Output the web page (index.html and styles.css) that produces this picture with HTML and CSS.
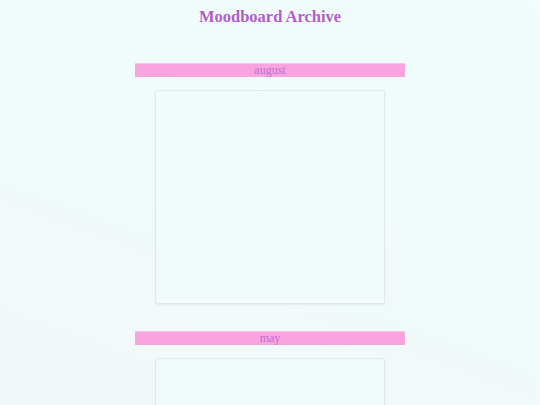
FILE: index.html
```html
<!DOCTYPE html>
<html>
<head>
<meta charset="utf-8">
<link rel="stylesheet" href="styles.css">
</head>
<body>
<h1 class="title">Moodboard Archive</h1>
<main class="archive">
  <section class="month">
    <div class="month-label">august</div>
    <div class="board"></div>
  </section>
  <section class="month">
    <div class="month-label">may</div>
    <div class="board"></div>
  </section>
</main>
</body>
</html>
```

FILE: styles.css
```css
html, body {
  margin: 0;
  padding: 0;
}
body {
  min-height: 405px;
  background: linear-gradient(200deg, #f0fdfd 0%, #f1fafa 50%, #f3f7f7 100%);
  font-family: "Liberation Serif", "Times New Roman", serif;
  overflow: hidden;
}
.title {
  margin: 0;
  padding-top: 6px;
  text-align: center;
  font-size: 16.5px;
  line-height: 21px;
  font-weight: bold;
  color: #b35ccb;
}
.archive {
  display: flex;
  flex-direction: column;
  align-items: center;
  padding-top: 36px;
  gap: 27px;
}
.month {
  width: 270px;
  display: flex;
  flex-direction: column;
  align-items: center;
  gap: 13px;
}
.month-label {
  align-self: stretch;
  background: #f9a3df;
  border-top: 1px solid #fbc2e8;
  color: #c16ed3;
  text-align: center;
  font-size: 12px;
  line-height: 12px;
  height: 13px;
}
.board {
  width: 228px;
  height: 212px;
  border: 1px solid #e2e9e9;
  border-radius: 2px;
  box-shadow: 0 1px 2px rgba(0, 0, 0, 0.06);
  background: #f1fbfb;
}
```
